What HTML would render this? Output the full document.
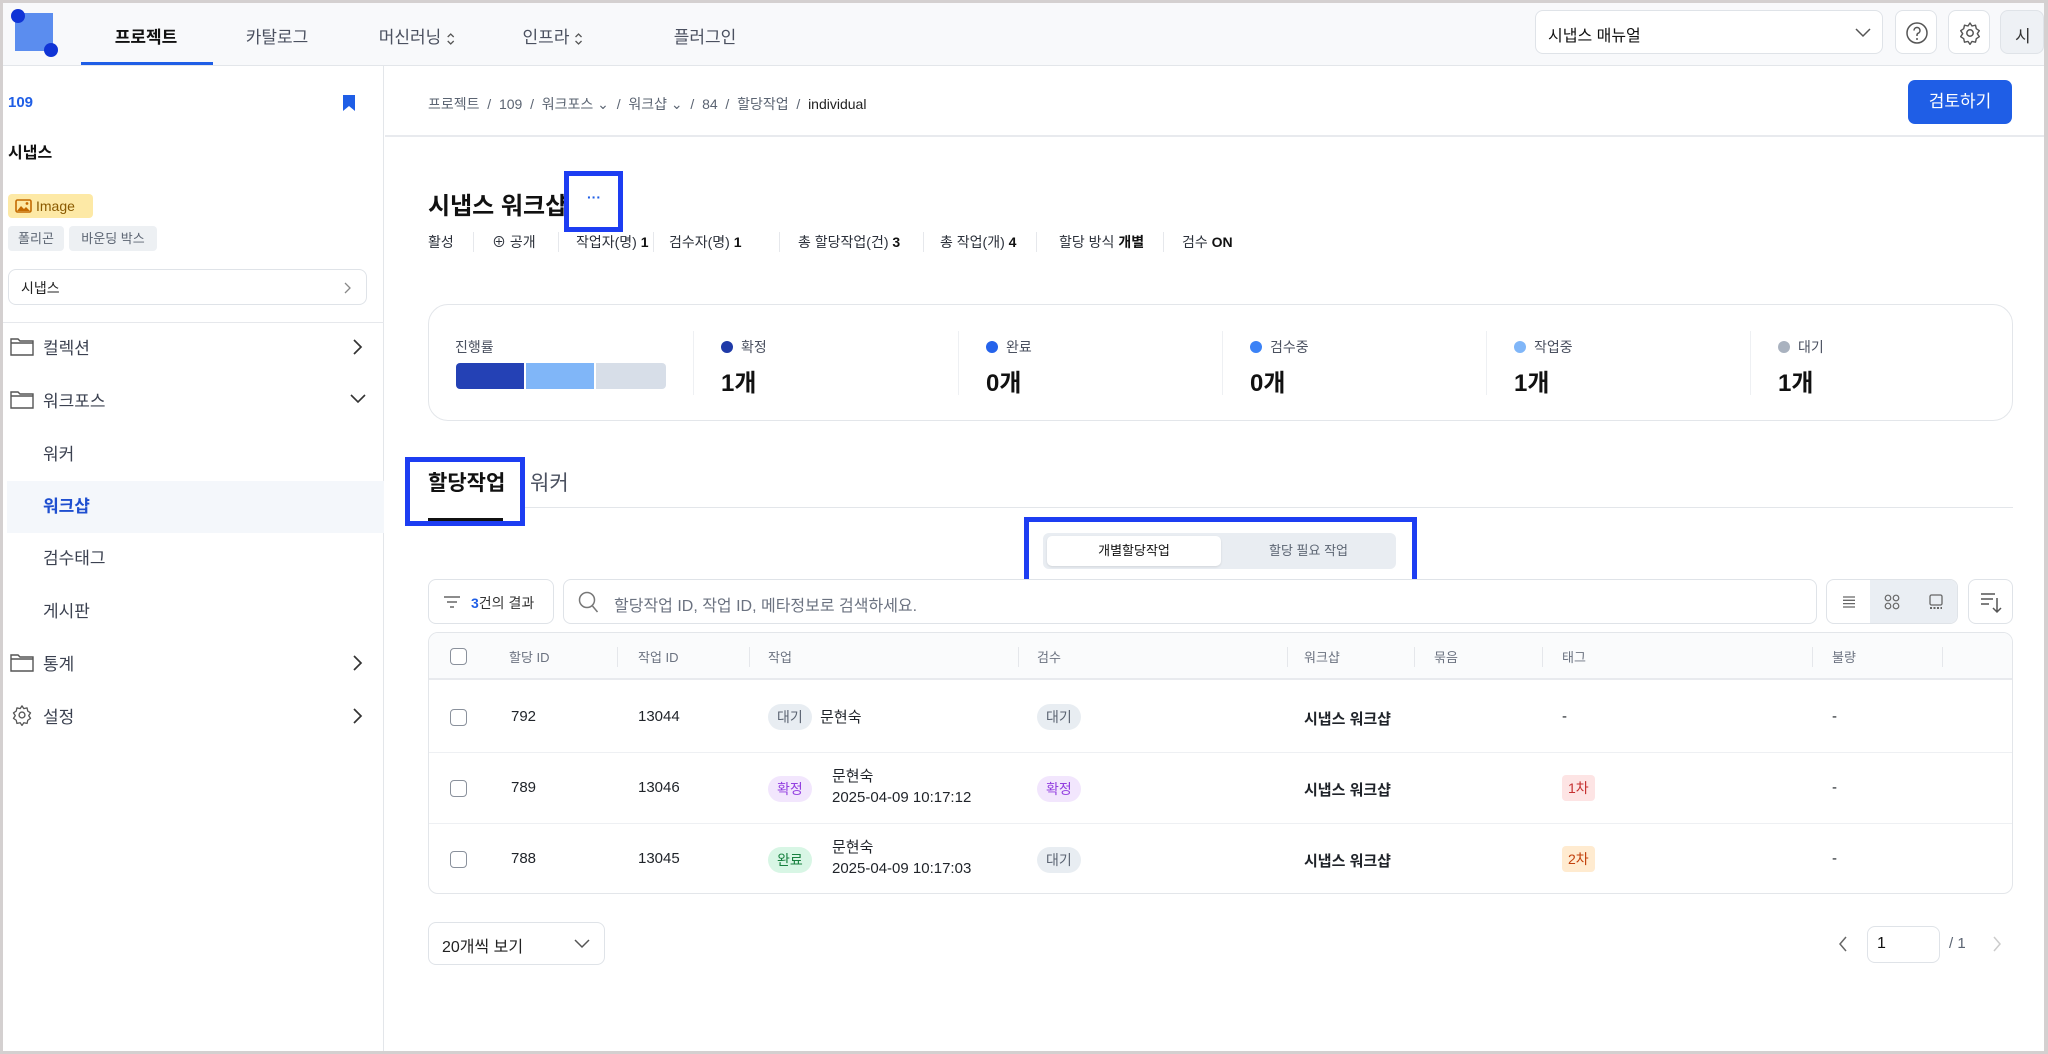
<!DOCTYPE html>
<html><head><meta charset="utf-8">
<style>
*{box-sizing:border-box;margin:0;padding:0}
body{width:2048px;height:1054px;overflow:hidden;background:#d4d0d0;font-family:"Liberation Sans","Noto Sans CJK KR",sans-serif;color:#1f2329;position:relative}
.frame{position:absolute;left:3px;top:3px;width:2041px;height:1048px;background:#fff;overflow:hidden}
.a{position:absolute;white-space:nowrap}
.hdr{position:absolute;left:0;top:0;width:2041px;height:63px;background:#f8f9fb;border-bottom:1px solid #e3e6ea}
.tab{position:absolute;top:20px;font-size:17px;color:#4b5160;transform:translateX(-50%)}
.btn{position:absolute;border:1px solid #dfe3e8;border-radius:8px;background:#fff}
.side{position:absolute;left:0;top:63px;width:381px;height:990px;border-right:1px solid #e3e6ea;background:#fff}
.mi{position:absolute;left:40px;font-size:17px;color:#3b4150}
.badge{display:inline-block;height:26px;line-height:26px;border-radius:13px;padding:0 9px;font-size:14px}
.w{background:#e8edf2;color:#5b6472}.c{background:#f2e6fd;color:#9340e0}.d{background:#d8f6e5;color:#17803f}
.th{position:absolute;top:14px;font-size:13px;color:#6b7280}
.sep{position:absolute;top:14px;width:1px;height:20px;background:#e5e7eb}
.cell{position:absolute;font-size:15px;color:#1f2329}
.cb{position:absolute;left:21px;width:17px;height:17px;border:1.5px solid #8a919c;border-radius:4px;background:#fff}
.lab{position:absolute;top:32px;font-size:14px;color:#4b5160}
.val{position:absolute;top:58px;font-size:24px;font-weight:bold;color:#111}
.dot{display:inline-block;width:12px;height:12px;border-radius:50%;margin-right:8px;vertical-align:-1px}
.vd{position:absolute;top:26px;width:1px;height:64px;background:#eef0f3}
.info{position:absolute;top:229px;font-size:14px;color:#2b303a}
.info b{color:#111}
.isep{position:absolute;top:229px;width:1px;height:20px;background:#e6e8ec}
.ud{display:inline-block;vertical-align:middle;margin-left:4px}
</style></head><body>
<div class="frame">
<div class="hdr">
 <div class="a" style="left:12px;top:10px;width:38px;height:38px;background:#5b8def"></div>
 <div class="a" style="left:8px;top:6px;width:14px;height:14px;border-radius:50%;background:#1034d6"></div>
 <div class="a" style="left:41px;top:40px;width:14px;height:14px;border-radius:50%;background:#1034d6"></div>
 <div class="tab" style="left:143px;color:#111;font-weight:bold">프로젝트</div>
 <div class="a" style="left:78px;top:59px;width:132px;height:3px;background:#1f5ee6"></div>
 <div class="tab" style="left:274px">카탈로그</div>
 <div class="tab" style="left:414px">머신러닝<svg class="ud" width="10" height="16" viewBox="0 0 10 16"><path d="M2 6l3-3 3 3M2 10l3 3 3-3" fill="none" stroke="#555" stroke-width="1.3"/></svg></div>
 <div class="tab" style="left:550px">인프라<svg class="ud" width="10" height="16" viewBox="0 0 10 16"><path d="M2 6l3-3 3 3M2 10l3 3 3-3" fill="none" stroke="#555" stroke-width="1.3"/></svg></div>
 <div class="tab" style="left:702px">플러그인</div>
 <div class="btn" style="left:1532px;top:7px;width:348px;height:44px"><span class="a" style="left:12px;top:11px;font-size:16px;color:#111">시냅스 매뉴얼</span>
  <svg class="a" style="left:318px;top:15px" width="18" height="14" viewBox="0 0 18 14"><path d="M2 3l7 7 7-7" fill="none" stroke="#555" stroke-width="1.5"/></svg></div>
 <div class="btn" style="left:1892px;top:7px;width:42px;height:44px"><svg class="a" style="left:9px;top:10px" width="24" height="24" viewBox="0 0 24 24"><circle cx="12" cy="12" r="10" fill="none" stroke="#555" stroke-width="1.5"/><path d="M9 9.5a3 3 0 1 1 4 2.8c-.8.4-1 1-1 1.8V15" fill="none" stroke="#555" stroke-width="1.5"/><circle cx="12" cy="18" r="1" fill="#555"/></svg></div>
 <div class="btn" style="left:1945px;top:7px;width:42px;height:44px"><svg class="a" style="left:9px;top:10px" width="24" height="24" viewBox="0 0 24 24"><circle cx="12" cy="12" r="3.2" fill="none" stroke="#555" stroke-width="1.5"/><path d="M12 2l2 3 3.5-.8.8 3.5 3 2-2 3 2 3-3 2-.8 3.5-3.5-.8-2 3-2-3-3.5.8-.8-3.5-3-2 2-3-2-3 3-2 .8-3.5 3.5.8z" fill="none" stroke="#555" stroke-width="1.4" stroke-linejoin="round"/></svg></div>
 <div class="btn" style="left:1997px;top:7px;width:44px;height:44px;background:#eef1f5"><span class="a" style="left:14px;top:11px;font-size:17px;color:#333">시</span></div>
</div>
<div class="side">
 <div class="a" style="left:5px;top:28px;font-size:15px;font-weight:bold;color:#1f5ee6">109</div>
 <svg class="a" style="left:339px;top:28px" width="14" height="18" viewBox="0 0 14 18"><path d="M1 1h12v16l-6-5-6 5z" fill="#1f5ee6"/></svg>
 <div class="a" style="left:5px;top:73px;font-size:16px;font-weight:bold;color:#111">시냅스</div>
 <div class="a" style="left:5px;top:128px;height:24px;width:85px;background:#fde9a6;border-radius:4px;font-size:14px;color:#8a5a00;line-height:24px;padding-left:28px">Image
  <svg class="a" style="left:7px;top:5px" width="17" height="14" viewBox="0 0 17 14"><rect x="1" y="1" width="15" height="12" rx="1.5" fill="none" stroke="#c46a00" stroke-width="1.6"/><path d="M2 12l4-5 3 3 2-2 4 4z" fill="#c46a00"/><circle cx="12" cy="4.5" r="1.4" fill="#c46a00"/></svg></div>
 <div class="a" style="left:5px;top:160px;height:25px;width:56px;background:#edf0f3;border-radius:4px;font-size:13px;color:#5b6472;line-height:25px;text-align:center">폴리곤</div>
 <div class="a" style="left:66px;top:160px;height:25px;width:88px;background:#edf0f3;border-radius:4px;font-size:13px;color:#5b6472;line-height:25px;text-align:center">바운딩 박스</div>
 <div class="btn" style="left:5px;top:203px;width:359px;height:36px"><span class="a" style="left:12px;top:8px;font-size:14px;color:#222">시냅스</span>
  <svg class="a" style="left:334px;top:11px" width="10" height="14" viewBox="0 0 10 14"><path d="M2 2l5 5-5 5" fill="none" stroke="#888" stroke-width="1.3"/></svg></div>
 <div class="a" style="left:0;top:256px;width:381px;height:1px;background:#e6e8ec"></div>
 <div class="a" style="left:4px;top:415px;width:377px;height:52px;background:#f4f7fb"></div>
 <svg class="a" style="left:7px;top:270px" width="24" height="20" viewBox="0 0 24 20"><path d="M1 3h7l2 2h13v14H1z M1 7h22" fill="none" stroke="#555" stroke-width="1.4"/></svg>
 <div class="mi" style="top:268px">컬렉션</div>
 <svg class="a" style="left:349px;top:272px" width="12" height="18" viewBox="0 0 12 18"><path d="M2 2l7 7-7 7" fill="none" stroke="#333" stroke-width="1.7"/></svg>
 <svg class="a" style="left:7px;top:323px" width="24" height="20" viewBox="0 0 24 20"><path d="M1 3h7l2 2h13v14H1z M1 7h22" fill="none" stroke="#555" stroke-width="1.4"/></svg>
 <div class="mi" style="top:321px">워크포스</div>
 <svg class="a" style="left:346px;top:327px" width="18" height="12" viewBox="0 0 18 12"><path d="M2 2l7 7 7-7" fill="none" stroke="#333" stroke-width="1.6"/></svg>
 <div class="mi" style="top:374px">워커</div>
 <div class="mi" style="top:426px;color:#1f4fd0;font-weight:bold">워크샵</div>
 <div class="mi" style="top:478px">검수태그</div>
 <div class="mi" style="top:531px">게시판</div>
 <svg class="a" style="left:7px;top:586px" width="24" height="20" viewBox="0 0 24 20"><path d="M1 3h7l2 2h13v14H1z M1 7h22" fill="none" stroke="#555" stroke-width="1.4"/></svg>
 <div class="mi" style="top:584px">통계</div>
 <svg class="a" style="left:349px;top:588px" width="12" height="18" viewBox="0 0 12 18"><path d="M2 2l7 7-7 7" fill="none" stroke="#333" stroke-width="1.7"/></svg>
 <svg class="a" style="left:8px;top:638px" width="22" height="22" viewBox="0 0 24 24"><circle cx="12" cy="12" r="3.2" fill="none" stroke="#555" stroke-width="1.5"/><path d="M12 2l2 3 3.5-.8.8 3.5 3 2-2 3 2 3-3 2-.8 3.5-3.5-.8-2 3-2-3-3.5.8-.8-3.5-3-2 2-3-2-3 3-2 .8-3.5 3.5.8z" fill="none" stroke="#555" stroke-width="1.4" stroke-linejoin="round"/></svg>
 <div class="mi" style="top:637px">설정</div>
 <svg class="a" style="left:349px;top:641px" width="12" height="18" viewBox="0 0 12 18"><path d="M2 2l7 7-7 7" fill="none" stroke="#333" stroke-width="1.7"/></svg>
</div>
<div class="a" style="left:425px;top:91px;font-size:14px;color:#5b6472">프로젝트 &nbsp;/&nbsp; 109 &nbsp;/&nbsp; 워크포스 ⌄ &nbsp;/&nbsp; 워크샵 ⌄ &nbsp;/&nbsp; 84 &nbsp;/&nbsp; 할당작업 &nbsp;/&nbsp; <span style="color:#222">individual</span></div>
<div class="a" style="left:1905px;top:77px;width:104px;height:44px;background:#1f5ee6;border-radius:7px;color:#fff;font-size:17px;line-height:44px;text-align:center">검토하기</div>
<div class="a" style="left:382px;top:132px;width:1659px;height:2px;background:#e8eaee"></div>
<div class="a" style="left:425px;top:183px;font-size:24px;font-weight:bold;color:#111">시냅스 워크샵</div>
<div class="a" style="left:561px;top:168px;width:59px;height:61px;border:5px solid #1d3df2"></div>
<div class="a" style="left:584px;top:186px;font-size:14px;color:#1f5ee6;font-weight:bold">···</div>
<div class="info" style="left:425px">활성</div><div class="isep" style="left:470px"></div>
<div class="info" style="left:489px">⊕ 공개</div><div class="isep" style="left:555px"></div>
<div class="info" style="left:573px">작업자(명) <b>1</b></div><div class="isep" style="left:650px"></div>
<div class="info" style="left:666px">검수자(명) <b>1</b></div><div class="isep" style="left:776px"></div>
<div class="info" style="left:795px">총 할당작업(건) <b>3</b></div><div class="isep" style="left:920px"></div>
<div class="info" style="left:937px">총 작업(개) <b>4</b></div><div class="isep" style="left:1033px"></div>
<div class="info" style="left:1056px">할당 방식 <b>개별</b></div><div class="isep" style="left:1160px"></div>
<div class="info" style="left:1179px">검수 <b>ON</b></div>
<div class="a" style="left:425px;top:301px;width:1585px;height:117px;border:1.5px solid #e3e6ea;border-radius:20px">
 <div class="lab" style="left:26px">진행률</div>
 <div class="a" style="left:27px;top:58px;width:68px;height:26px;background:#2441b5;border-radius:4px 0 0 4px"></div>
 <div class="a" style="left:97px;top:58px;width:68px;height:26px;background:#80b6f8"></div>
 <div class="a" style="left:167px;top:58px;width:70px;height:26px;background:#d7dee8;border-radius:0 4px 4px 0"></div>
 <div class="vd" style="left:264px"></div>
 <div class="lab" style="left:292px"><span class="dot" style="background:#1f3aa8"></span>확정</div><div class="val" style="left:292px">1개</div>
 <div class="vd" style="left:529px"></div>
 <div class="lab" style="left:557px"><span class="dot" style="background:#2563eb"></span>완료</div><div class="val" style="left:557px">0개</div>
 <div class="vd" style="left:793px"></div>
 <div class="lab" style="left:821px"><span class="dot" style="background:#3b82f6"></span>검수중</div><div class="val" style="left:821px">0개</div>
 <div class="vd" style="left:1057px"></div>
 <div class="lab" style="left:1085px"><span class="dot" style="background:#80b6f8"></span>작업중</div><div class="val" style="left:1085px">1개</div>
 <div class="vd" style="left:1321px"></div>
 <div class="lab" style="left:1349px"><span class="dot" style="background:#a9b2bf"></span>대기</div><div class="val" style="left:1349px">1개</div>
</div>
<div class="a" style="left:402px;top:504px;width:1608px;height:1px;background:#e3e6ea"></div>
<div class="a" style="left:402px;top:454px;width:120px;height:69px;border:5px solid #1d3df2;background:#fff"></div>
<div class="a" style="left:425px;top:464px;font-size:21px;font-weight:bold;color:#111">할당작업</div>
<div class="a" style="left:425px;top:515px;width:75px;height:3px;background:#111"></div>
<div class="a" style="left:527px;top:464px;font-size:21px;color:#4b5160">워커</div>
<div class="a" style="left:1021px;top:514px;width:393px;height:72px;border:5px solid #1d3df2"></div>
<div class="a" style="left:1040px;top:530px;width:353px;height:36px;background:#e9edf2;border-radius:6px"></div>
<div class="a" style="left:1044px;top:533px;width:174px;height:30px;background:#fff;border-radius:5px;box-shadow:0 1px 2px rgba(0,0,0,.1);font-size:13px;color:#111;line-height:30px;text-align:center">개별할당작업</div>
<div class="a" style="left:1218px;top:533px;width:175px;height:30px;font-size:13px;color:#5b6472;line-height:30px;text-align:center">할당 필요 작업</div>
<div class="btn" style="left:425px;top:576px;width:126px;height:45px">
 <svg class="a" style="left:14px;top:15px" width="18" height="14" viewBox="0 0 18 14"><path d="M1 2h16M4 7h10M7 12h4" stroke="#666" stroke-width="1.5"/></svg>
 <span class="a" style="left:42px;top:13px;font-size:14px;color:#333"><b style="color:#1f5ee6">3</b>건의 결과</span></div>
<div class="btn" style="left:560px;top:576px;width:1254px;height:45px"><svg class="a" style="left:14px;top:11px" width="22" height="24" viewBox="0 0 22 24"><circle cx="9" cy="9" r="7.5" fill="none" stroke="#777" stroke-width="1.5"/><path d="M14.5 15l5 6" stroke="#777" stroke-width="1.5"/></svg><span class="a" style="left:50px;top:12px;font-size:16px;color:#6b7280">할당작업 ID, 작업 ID, 메타정보로 검색하세요.</span></div>
<div class="btn" style="left:1823px;top:576px;width:132px;height:45px;overflow:hidden"><div class="a" style="left:43px;top:0;width:88px;height:45px;background:#eaeef3"></div>
 <svg class="a" style="left:14px;top:14px" width="16" height="16" viewBox="0 0 16 16"><path d="M2 3h12M2 6.3h12M2 9.6h12M2 13h12" stroke="#666" stroke-width="1.3"/></svg>
 <svg class="a" style="left:56px;top:13px" width="18" height="18" viewBox="0 0 18 18"><circle cx="5" cy="5" r="2.8" fill="none" stroke="#666" stroke-width="1.2"/><circle cx="13" cy="5" r="2.8" fill="none" stroke="#666" stroke-width="1.2"/><circle cx="5" cy="13" r="2.8" fill="none" stroke="#666" stroke-width="1.2"/><circle cx="13" cy="13" r="2.8" fill="none" stroke="#666" stroke-width="1.2"/></svg>
 <svg class="a" style="left:100px;top:13px" width="18" height="18" viewBox="0 0 18 18"><rect x="3" y="2" width="12" height="10" rx="1.5" fill="none" stroke="#666" stroke-width="1.3"/><path d="M3 15h12" stroke="#666" stroke-width="2" stroke-dasharray="2 1.5"/></svg></div>
<div class="btn" style="left:1965px;top:576px;width:45px;height:45px">
 <svg class="a" style="left:10px;top:10px" width="24" height="24" viewBox="0 0 24 24"><path d="M2 4h14M2 9h12M2 14h8M18 8v14M14 18l4 4 4-4" fill="none" stroke="#555" stroke-width="1.5"/></svg></div>
<div class="a" style="left:425px;top:629px;width:1585px;height:262px;border:1.5px solid #e3e6ea;border-radius:10px;overflow:hidden">
 <div class="a" style="left:0;top:0;width:1585px;height:47px;background:#fafbfc;border-bottom:2px solid #e8eaee">
  <div class="cb" style="top:15px"></div>
  <div class="th" style="left:80px">할당 ID</div><div class="sep" style="left:188px"></div>
  <div class="th" style="left:209px">작업 ID</div><div class="sep" style="left:320px"></div>
  <div class="th" style="left:339px">작업</div><div class="sep" style="left:589px"></div>
  <div class="th" style="left:608px">검수</div><div class="sep" style="left:858px"></div>
  <div class="th" style="left:875px">워크샵</div><div class="sep" style="left:985px"></div>
  <div class="th" style="left:1005px">묶음</div><div class="sep" style="left:1113px"></div>
  <div class="th" style="left:1133px">태그</div><div class="sep" style="left:1383px"></div>
  <div class="th" style="left:1403px">불량</div><div class="sep" style="left:1513px"></div>
 </div>
 <div class="a" style="left:0;top:49px;width:1585px;height:71px;border-bottom:1px solid #eef0f3">
  <div class="cb" style="top:27px"></div>
  <div class="cell" style="left:82px;top:26px">792</div>
  <div class="cell" style="left:209px;top:26px">13044</div>
  <div class="cell" style="left:339px;top:22px"><span class="badge w">대기</span>&nbsp; 문현숙</div>
  <div class="cell" style="left:608px;top:22px"><span class="badge w">대기</span></div>
  <div class="cell" style="left:875px;top:26px;font-weight:bold">시냅스 워크샵</div>
  <div class="cell" style="left:1133px;top:26px">-</div>
  <div class="cell" style="left:1403px;top:26px">-</div>
 </div>
 <div class="a" style="left:0;top:121px;width:1585px;height:70px;border-bottom:1px solid #eef0f3">
  <div class="cb" style="top:26px"></div>
  <div class="cell" style="left:82px;top:25px">789</div>
  <div class="cell" style="left:209px;top:25px">13046</div>
  <div class="cell" style="left:339px;top:22px"><span class="badge c">확정</span></div>
  <div class="cell" style="left:403px;top:12px;line-height:21px">문현숙<br>2025-04-09 10:17:12</div>
  <div class="cell" style="left:608px;top:22px"><span class="badge c">확정</span></div>
  <div class="cell" style="left:875px;top:25px;font-weight:bold">시냅스 워크샵</div>
  <div class="cell" style="left:1133px;top:21px"><span class="badge" style="background:#fde4e4;color:#c53030;border-radius:4px;padding:0 6px">1차</span></div>
  <div class="cell" style="left:1403px;top:25px">-</div>
 </div>
 <div class="a" style="left:0;top:192px;width:1585px;height:70px">
  <div class="cb" style="top:26px"></div>
  <div class="cell" style="left:82px;top:25px">788</div>
  <div class="cell" style="left:209px;top:25px">13045</div>
  <div class="cell" style="left:339px;top:22px"><span class="badge d">완료</span></div>
  <div class="cell" style="left:403px;top:12px;line-height:21px">문현숙<br>2025-04-09 10:17:03</div>
  <div class="cell" style="left:608px;top:22px"><span class="badge w">대기</span></div>
  <div class="cell" style="left:875px;top:25px;font-weight:bold">시냅스 워크샵</div>
  <div class="cell" style="left:1133px;top:21px"><span class="badge" style="background:#ffebd0;color:#c2410c;border-radius:4px;padding:0 6px">2차</span></div>
  <div class="cell" style="left:1403px;top:25px">-</div>
 </div>
</div>
<div class="btn" style="left:425px;top:919px;width:177px;height:43px"><span class="a" style="left:13px;top:10px;font-size:16px;color:#222">20개씩 보기</span>
 <svg class="a" style="left:144px;top:15px" width="18" height="12" viewBox="0 0 18 12"><path d="M2 2l7 7 7-7" fill="none" stroke="#555" stroke-width="1.5"/></svg></div>
<svg class="a" style="left:1834px;top:932px" width="12" height="18" viewBox="0 0 12 18"><path d="M9 2L3 9l6 7" fill="none" stroke="#666" stroke-width="1.5"/></svg>
<div class="btn" style="left:1864px;top:923px;width:73px;height:37px"><span class="a" style="left:9px;top:8px;font-size:16px;color:#111">1</span></div>
<span class="a" style="left:1946px;top:932px;font-size:15px;color:#5b6472">/ 1</span>
<svg class="a" style="left:1988px;top:932px" width="12" height="18" viewBox="0 0 12 18"><path d="M3 2l6 7-6 7" fill="none" stroke="#ccc" stroke-width="1.5"/></svg>
</div>
</body></html>
